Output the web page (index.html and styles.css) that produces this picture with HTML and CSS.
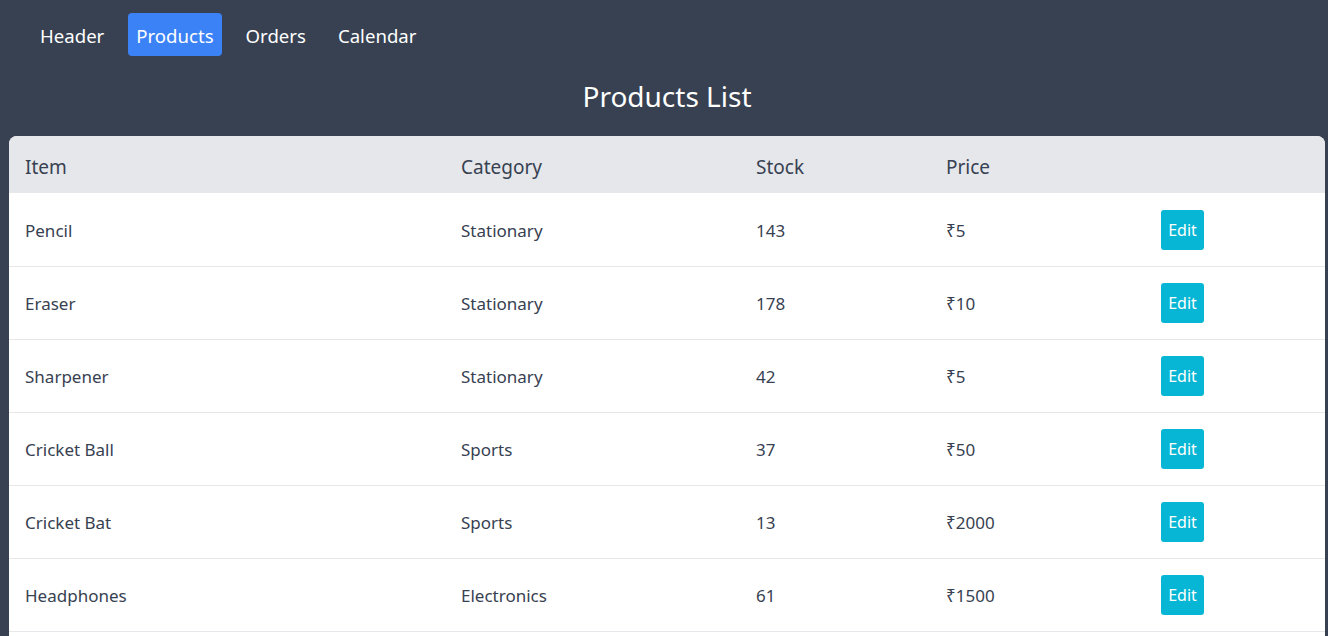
FILE: index.html
```html
<!DOCTYPE html>
<html>
<head>
<meta charset="utf-8">
<link rel="stylesheet" href="styles.css">
</head>
<body>
<nav class="nav">
  <a class="nav-item">Header</a>
  <a class="nav-item active">Products</a>
  <a class="nav-item">Orders</a>
  <a class="nav-item">Calendar</a>
</nav>
<h1 class="title">Products List</h1>
<div class="card">
  <table class="table">
    <colgroup>
      <col class="c-item"><col class="c-cat"><col class="c-stock"><col class="c-price"><col class="c-act">
    </colgroup>
    <thead>
      <tr><th>Item</th><th>Category</th><th>Stock</th><th>Price</th><th></th></tr>
    </thead>
    <tbody>
      <tr><td>Pencil</td><td>Stationary</td><td>143</td><td>₹5</td><td><button class="edit">Edit</button></td></tr>
      <tr><td>Eraser</td><td>Stationary</td><td>178</td><td>₹10</td><td><button class="edit">Edit</button></td></tr>
      <tr><td>Sharpener</td><td>Stationary</td><td>42</td><td>₹5</td><td><button class="edit">Edit</button></td></tr>
      <tr><td>Cricket Ball</td><td>Sports</td><td>37</td><td>₹50</td><td><button class="edit">Edit</button></td></tr>
      <tr><td>Cricket Bat</td><td>Sports</td><td>13</td><td>₹2000</td><td><button class="edit">Edit</button></td></tr>
      <tr><td>Headphones</td><td>Electronics</td><td>61</td><td>₹1500</td><td><button class="edit">Edit</button></td></tr>
    </tbody>
  </table>
</div>
</body>
</html>
```
FILE: styles.css
```css
html, body {
  margin: 0;
  padding: 0;
}
body {
  background: #374151;
  font-family: "Noto Sans", "Open Sans", sans-serif;
  color: #374151;
  overflow: hidden;
}
.nav {
  display: flex;
  gap: 16px;
  padding: 13px 0 0 32px;
}
.nav-item {
  display: block;
  color: #ffffff;
  font-size: 18.6px;
  line-height: 27px;
  padding: 9px 8px 7px;
  border-radius: 4px;
  cursor: pointer;
}
.nav-item.active {
  background: #3b82f6;
}
.title {
  margin: 0;
  padding: 20px 0 20px 6px;
  text-align: center;
  color: #ffffff;
  font-weight: 400;
  font-size: 28px;
  line-height: 40px;
}
.card {
  margin-left: 9px;
  width: 1316px;
  background: #ffffff;
  border-radius: 8px 8px 0 0;
  overflow: hidden;
  padding-bottom: 20px;
}
.table {
  width: 100%;
  border-collapse: collapse;
  table-layout: fixed;
}
.c-item { width: 436px; }
.c-cat { width: 295px; }
.c-stock { width: 190px; }
.c-price { width: 215px; }
.table th {
  background: #e5e7eb;
  text-align: left;
  font-weight: 400;
  font-size: 19px;
  height: 57px;
  padding: 4px 16px 0;
  box-sizing: border-box;
}
.table td {
  font-size: 17px;
  height: 73px;
  padding: 2px 16px 0;
  box-sizing: border-box;
  border-bottom: 1px solid #e5e7eb;
}
.edit {
  display: block;
  background: #06b6d4;
  color: #ffffff;
  border: none;
  border-radius: 3px;
  font-family: inherit;
  font-size: 16px;
  width: 43px;
  height: 40px;
  padding: 0;
  margin-top: -1px;
}
```
